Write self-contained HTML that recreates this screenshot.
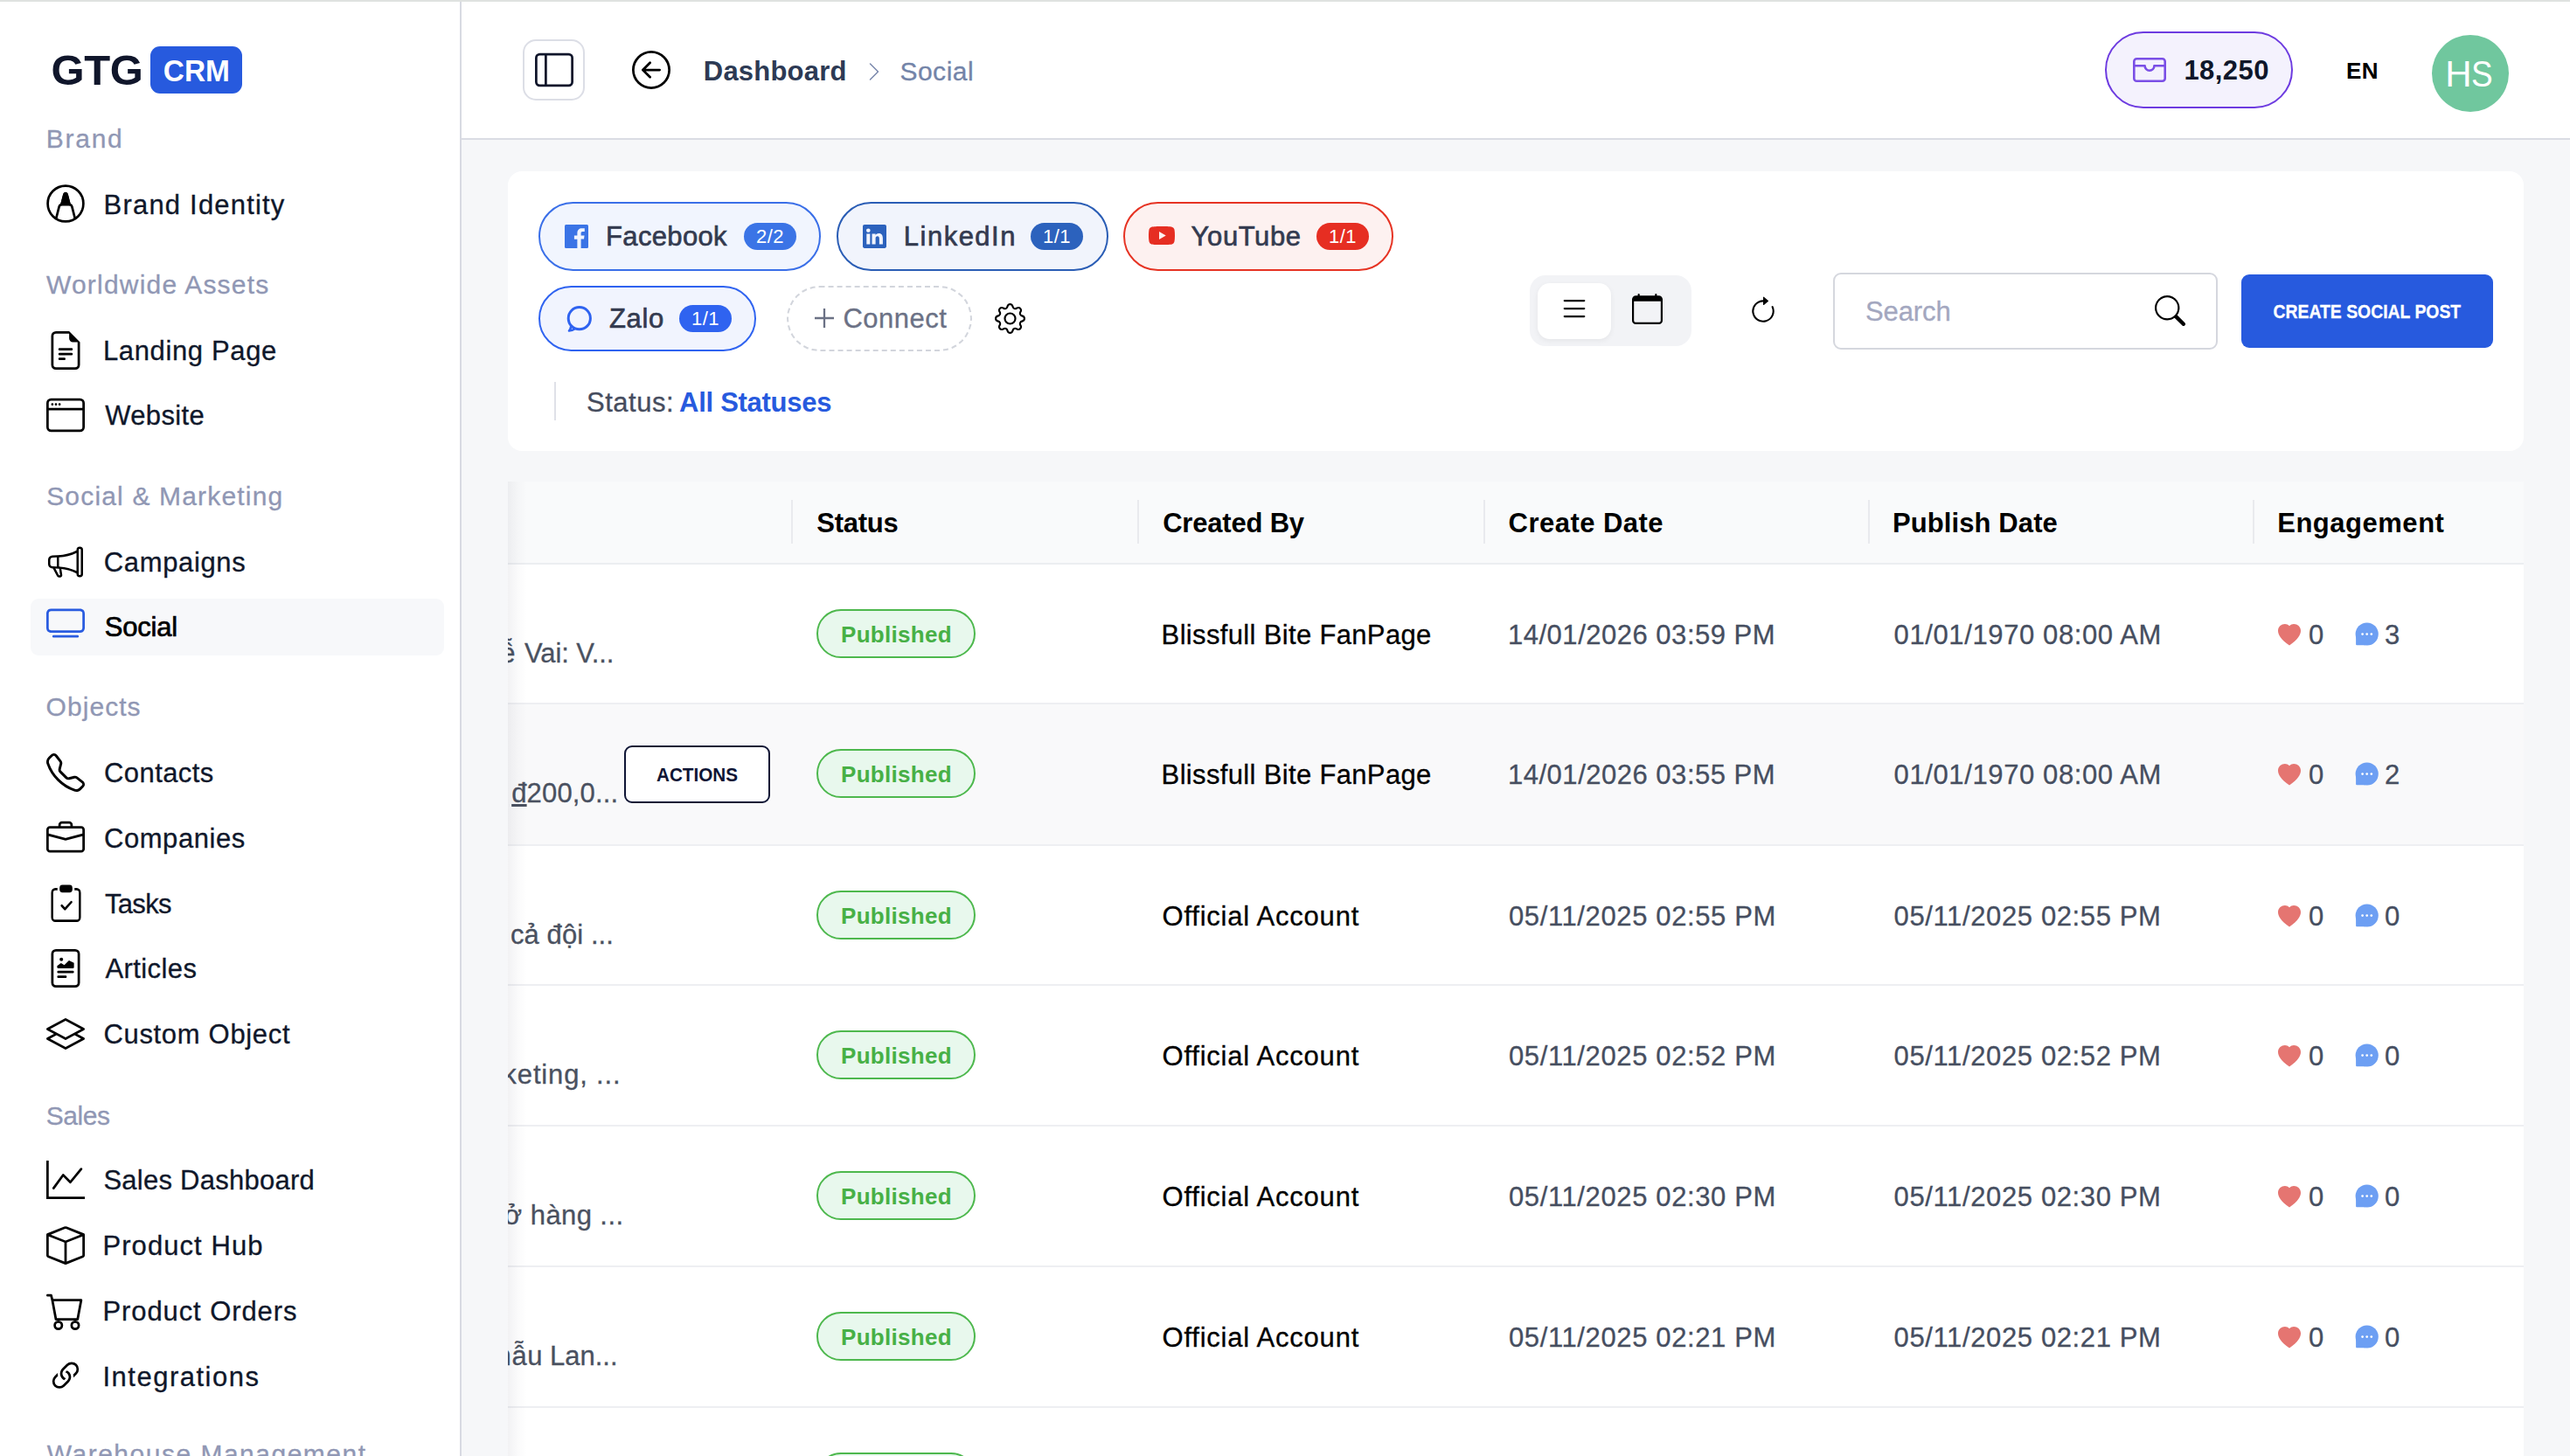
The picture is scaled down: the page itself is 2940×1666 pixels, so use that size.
<!DOCTYPE html>
<html>
<head>
<meta charset="utf-8">
<title>Social</title>
<style>
*{box-sizing:border-box;margin:0;padding:0}
html,body{width:2940px;height:1666px;overflow:hidden;background:#f6f7f9;font-family:"Liberation Sans",sans-serif;}
body{position:relative}
.abs{position:absolute}
svg{display:block}
#topline{left:0;top:0;width:2940px;height:2px;background:#dfe2e0;z-index:10}
/* sidebar */
#sidebar{left:0;top:0;width:528px;height:1666px;background:#fff;border-right:2px solid #d8dae2}
.sh{position:absolute;left:53px;height:40px;line-height:40px;font-size:30px;color:#9097b4;white-space:nowrap;letter-spacing:.6px}
.si{position:absolute;left:35px;width:473px;height:65px;border-radius:9px;display:flex;align-items:center;color:#0f172a;font-size:31px;white-space:nowrap;letter-spacing:.9px}
.si .ic{position:absolute;left:18px;top:10px;width:44px;height:44px}
.si .tx{position:absolute;left:84px;top:0;line-height:65px}
.si.on{background:#f7f8fa;color:#000;-webkit-text-stroke:.7px #000}
.si,.sh,.c0,.cb,.dt,#bc2,#sph,#st1,#p5{-webkit-text-stroke:.3px}
#st2{-webkit-text-stroke:0}
#logo{left:0;top:0}
.gtg{position:absolute;left:58px;top:53px;font-size:49px;line-height:54px;font-weight:bold;color:#10162b;letter-spacing:.2px}
.crm{position:absolute;left:172px;top:53px;width:105px;height:54px;border-radius:11px;background:#275ade;color:#fff;font-size:35px;font-weight:bold;line-height:55px;text-align:center}
/* header */
#header{left:528px;top:0;width:2412px;height:160px;background:#fff;border-bottom:2px solid #dadce4}
.t{white-space:nowrap}
#tgl{left:70px;top:45px;width:71px;height:70px;border:2px solid #dcdee6;border-radius:15px;background:#fff}
#credit{left:1880px;top:36px;width:215px;height:88px;border:2px solid #6d3be0;border-radius:44px;background:#f4f2fd}
#avatar{left:2254px;top:40px;width:88px;height:88px;border-radius:50%;background:#70c79e;color:#fff;font-size:42px;line-height:89px;text-align:center}
/* cards */
#filters{left:581px;top:196px;width:2306px;height:320px;background:#fff;border-radius:16px}
.pill{border:2px solid;border-radius:40px}
.pt{top:1px;line-height:74px;font-size:31px;color:#333a4f;-webkit-text-stroke:.65px #333a4f}
.bdg{width:60px;height:31px;border-radius:16px;color:#fff;font-size:22px;line-height:31px;text-align:center;letter-spacing:.5px}
#vt{width:185px;height:81px;border-radius:18px;background:#f2f3f6}
#vta{left:9px;top:9px;width:84px;height:64px;border-radius:14px;background:#fff;box-shadow:0 2px 6px rgba(0,0,0,.06)}
#search{width:440px;height:88px;border:2px solid #d5d7de;border-radius:9px;background:#fff}
#create{width:288px;height:84px;border-radius:9px;background:#275ade;color:#fff;font-weight:bold;font-size:22px;line-height:86px;text-align:center}
#createt{display:inline-block;margin-left:0px;-webkit-text-stroke:.3px #fff;transform:scaleX(.881);transform-origin:50% 50%}
#actt{display:inline-block;transform:scaleX(.94);transform-origin:50% 50%}
#crm{display:inline-block;transform:scaleX(.955);transform-origin:50% 50%}
#table{left:581px;top:551px;width:2306px;height:1115px;background:#fff;overflow:hidden}
#thead{background:#f9fafb;border-bottom:2px solid #eceef1}
.th{font-size:31px;font-weight:bold;line-height:42px;color:#000;letter-spacing:.3px}
.row{border-bottom:2px solid #eeeff2;background:#fff}
.row.hov{background:#f9f9fa}
.c0{font-size:31px;line-height:42px;color:#4a5160;letter-spacing:.5px}
.cb{font-size:31px;line-height:42px;color:#000;letter-spacing:.5px}
.dt{font-size:31px;line-height:42px;color:#464e60;letter-spacing:.4px}
.pub{width:182px;height:56px;border:2px solid #4db84d;border-radius:28px;background:#e8f8ed;color:#47b046;font-weight:bold;font-size:26px;line-height:54px;text-align:center}
#actions{width:167px;height:66px;border:2.500px solid #0f1535;border-radius:9px;background:#fff;color:#0f1535;font-weight:bold;font-size:22px;line-height:64px;text-align:center}
#lshadow{left:0;top:0;width:22px;height:1115px;background:linear-gradient(90deg,rgba(20,20,50,.055),rgba(20,20,50,.02) 50%,rgba(20,20,50,0))}
.pre{right:100%;top:0;white-space:pre}
/*FIT*/
#gtg{letter-spacing:-0.30px;margin-left:0.4px}
#h0{letter-spacing:1.73px;margin-left:-0.2px}
#h1{letter-spacing:1.20px;margin-left:0.0px}
#h2{letter-spacing:1.17px;margin-left:0.2px}
#h3{letter-spacing:1.05px;margin-left:-0.4px}
#h4{letter-spacing:-0.45px;margin-left:-0.2px}
#h5{letter-spacing:1.50px;margin-left:0.8px}
#i0{letter-spacing:1.19px;margin-left:-0.4px}
#i1{letter-spacing:0.63px;margin-left:-1.0px}
#i2{letter-spacing:0.35px;margin-left:1.2px}
#i3{letter-spacing:0.64px;margin-left:-0.2px}
#i4{letter-spacing:-0.22px;margin-left:0.8px}
#i5{letter-spacing:0.42px;margin-left:0.0px}
#i6{letter-spacing:0.55px;margin-left:0.0px}
#i7{letter-spacing:-0.70px;margin-left:1.0px}
#i8{letter-spacing:0.43px;margin-left:1.4px}
#i9{letter-spacing:0.68px;margin-left:-0.6px}
#i10{letter-spacing:0.25px;margin-left:-0.6px}
#i11{letter-spacing:1.08px;margin-left:-1.6px}
#i12{letter-spacing:0.91px;margin-left:-1.6px}
#i13{letter-spacing:1.51px;margin-left:-1.6px}
#bc1{letter-spacing:0.21px;margin-left:0.8px}
#bc2{letter-spacing:0.52px;margin-left:0.4px}
#crd{letter-spacing:0.44px;margin-left:-1.6px}
#lang{letter-spacing:0.40px;margin-left:0.0px}
#p1{letter-spacing:0.35px;margin-left:-2.0px}
#p2{letter-spacing:1.49px;margin-left:-2.2px}
#p3{letter-spacing:0.60px;margin-left:-0.4px}
#p4{letter-spacing:0.66px;margin-left:-1.0px}
#p5{letter-spacing:0.50px;margin-left:-0.6px}
#sph{letter-spacing:-0.12px;margin-left:0.0px}
#st0{letter-spacing:0.50px;margin-left:1.0px}
#st2{letter-spacing:-0.28px;margin-left:-2.6px}
#th0{letter-spacing:-0.22px;margin-left:0.2px}
#th1{letter-spacing:-0.20px;margin-left:0.2px}
#th2{letter-spacing:0.46px;margin-left:-0.4px}
#th3{letter-spacing:0.10px;margin-left:-1.0px}
#th4{letter-spacing:0.52px;margin-left:-0.8px}
#c00{letter-spacing:-0.12px;margin-left:1.0px}
#c01{letter-spacing:0.17px;margin-left:0.5px}
#c02{letter-spacing:0.08px;margin-left:0.5px}
#c03{letter-spacing:0.84px;margin-left:0.5px}
#c04{letter-spacing:0.40px;margin-left:-0.0px}
#c05{letter-spacing:0.00px;margin-left:-1.0px}
#pubt0{letter-spacing:0.29px;margin-left:1.0px}
#cb0{letter-spacing:0.34px;margin-left:-1.4px}
#dt0{letter-spacing:0.51px;margin-left:-1.0px}
#dt1{letter-spacing:0.61px;margin-left:0.6px}
#pubt1{letter-spacing:0.29px;margin-left:1.0px}
#cb1{letter-spacing:0.34px;margin-left:-1.4px}
#dt4{letter-spacing:0.51px;margin-left:-1.0px}
#dt5{letter-spacing:0.61px;margin-left:0.6px}
#pubt2{letter-spacing:0.29px;margin-left:1.0px}
#cb2{letter-spacing:0.77px;margin-left:-0.4px}
#dt8{letter-spacing:0.62px;margin-left:0.0px}
#dt9{letter-spacing:0.62px;margin-left:0.6px}
#pubt3{letter-spacing:0.29px;margin-left:1.0px}
#cb3{letter-spacing:0.77px;margin-left:-0.4px}
#dt12{letter-spacing:0.62px;margin-left:0.0px}
#dt13{letter-spacing:0.62px;margin-left:0.6px}
#pubt4{letter-spacing:0.29px;margin-left:1.0px}
#cb4{letter-spacing:0.77px;margin-left:-0.4px}
#dt16{letter-spacing:0.62px;margin-left:0.0px}
#dt17{letter-spacing:0.62px;margin-left:0.6px}
#pubt5{letter-spacing:0.29px;margin-left:1.0px}
#cb5{letter-spacing:0.77px;margin-left:-0.4px}
#dt20{letter-spacing:0.62px;margin-left:0.0px}
#dt21{letter-spacing:0.62px;margin-left:0.6px}
/*ENDFIT*/
</style>
</head>
<body>
<div id="topline" class="abs"></div>
<div id="sidebar" class="abs">
<div id="logo" class="abs"><span class="gtg" id="gtg">GTG</span><span class="crm"><span id="crm">CRM</span></span></div>
<div class="sh" id="h0" style="top:139px">Brand</div>
<div class="sh" id="h1" style="top:306px">Worldwide Assets</div>
<div class="sh" id="h2" style="top:547.5px">Social &amp; Marketing</div>
<div class="sh" id="h3" style="top:789px">Objects</div>
<div class="sh" id="h4" style="top:1257px">Sales</div>
<div class="sh" id="h5" style="top:1644px">Warehouse Management</div>
<div class="si" style="top:201.5px"><span class="ic" style="top:9px"><svg viewBox="0 0 44 44" width="44" height="44" fill="none" stroke="#000" stroke-width="2.7" stroke-linejoin="round" stroke-linecap="round"><circle cx="22" cy="22" r="20.4"/><path d="M11.2 39 L14.6 25.6 Q15 24 16.5 23.3 L17.6 22.8 L20.6 11.2 Q22 9 23.4 11.2 L26.4 22.8 L27.5 23.3 Q29 24 29.4 25.6 L32.8 39"/><path d="M20.6 11.2 Q22 9 23.4 11.2 L26.6 23.2 L17.4 23.2 Z" fill="#000"/></svg></span><span class="tx" id="i0">Brand Identity</span></div>
<div class="si" style="top:368.5px"><span class="ic"><svg viewBox="0 0 16 16" width="44" height="44" fill="#000"><path d="M5.5 7a.5.5 0 0 0 0 1h5a.5.5 0 0 0 0-1h-5zM5 9.5a.5.5 0 0 1 .5-.5h5a.5.5 0 0 1 0 1h-5a.5.5 0 0 1-.5-.5zm0 2a.5.5 0 0 1 .5-.5h2a.5.5 0 0 1 0 1h-2a.5.5 0 0 1-.5-.5z"/><path d="M9.5 0H4a2 2 0 0 0-2 2v12a2 2 0 0 0 2 2h8a2 2 0 0 0 2-2V4.5L9.5 0zm0 1v2A1.5 1.5 0 0 0 11 4.5h2V14a1 1 0 0 1-1 1H4a1 1 0 0 1-1-1V2a1 1 0 0 1 1-1h5.5z"/></svg></span><span class="tx" id="i1">Landing Page</span></div>
<div class="si" style="top:443.0px"><span class="ic"><svg viewBox="0 0 16 16" width="44" height="44" fill="#000"><path d="M2.5 4a.5.5 0 1 0 0-1 .5.5 0 0 0 0 1zm2-.5a.5.5 0 1 1-1 0 .5.5 0 0 1 1 0zm1 .5a.5.5 0 1 0 0-1 .5.5 0 0 0 0 1z"/><path d="M2 1a2 2 0 0 0-2 2v10a2 2 0 0 0 2 2h12a2 2 0 0 0 2-2V3a2 2 0 0 0-2-2H2zm13 2v2H1V3a1 1 0 0 1 1-1h12a1 1 0 0 1 1 1zM2 14a1 1 0 0 1-1-1V6h14v7a1 1 0 0 1-1 1H2z"/></svg></span><span class="tx" id="i2">Website</span></div>
<div class="si" style="top:610.5px"><span class="ic"><svg viewBox="0 0 16 16" width="40" height="40" style="margin:2px 0 0 2px" fill="#000"><path d="M13 2.5a1.5 1.5 0 0 1 3 0v11a1.5 1.5 0 0 1-3 0v-.214c-2.162-1.241-4.49-1.843-6.912-2.083l.405 2.712A1 1 0 0 1 5.51 15.1h-.548a1 1 0 0 1-.916-.599l-1.85-3.49a68.14 68.14 0 0 0-.202-.003A2.014 2.014 0 0 1 0 9V7a2.02 2.02 0 0 1 1.992-2.013 74.663 74.663 0 0 0 2.483-.075c3.043-.154 6.148-.849 8.525-2.199V2.5zm1 0v11a.5.5 0 0 0 1 0v-11a.5.5 0 0 0-1 0zm-1 1.35c-2.344 1.205-5.209 1.842-8 2.033v4.233c.18.01.359.022.537.036 2.568.189 5.093.744 7.463 1.993V3.85zm-9 6.215v-4.13a95.09 95.09 0 0 1-1.992.052A1.02 1.02 0 0 0 1 7v2c0 .55.448 1.002 1.006 1.009A60.49 60.49 0 0 1 4 10.065zm-.657.975 1.609 3.037.01.024h.548l-.002-.014-.443-2.966a68.019 68.019 0 0 0-1.722-.082z"/></svg></span><span class="tx" id="i3">Campaigns</span></div>
<div class="si on" style="top:684.5px"><span class="ic" style="top:6px"><svg viewBox="0 0 16 16" width="44" height="44" fill="#2a5ce0"><path d="M2.5 13.5A.5.5 0 0 1 3 13h10a.5.5 0 0 1 0 1H3a.5.5 0 0 1-.5-.5zM13.991 3l.024.001a1.46 1.46 0 0 1 .538.143.757.757 0 0 1 .302.254c.067.1.145.277.145.602v5.991l-.001.024a1.464 1.464 0 0 1-.143.538.758.758 0 0 1-.254.302c-.1.067-.277.145-.602.145H2.009l-.024-.001a1.464 1.464 0 0 1-.538-.143.758.758 0 0 1-.302-.254C1.078 10.502 1 10.325 1 10V4.009l.001-.024a1.46 1.46 0 0 1 .143-.538.758.758 0 0 1 .254-.302C1.498 3.078 1.675 3 2 3h11.991zM14 2H2C0 2 0 4 0 4v6c0 2 2 2 2 2h12c2 0 2-2 2-2V4c0-2-2-2-2-2z"/></svg></span><span class="tx" id="i4">Social</span></div>
<div class="si" style="top:851.5px"><span class="ic"><svg viewBox="0 0 16 16" width="44" height="44" fill="#000"><path d="M3.654 1.328a.678.678 0 0 0-1.015-.063L1.605 2.3c-.483.484-.661 1.169-.45 1.77a17.568 17.568 0 0 0 4.168 6.608 17.569 17.569 0 0 0 6.608 4.168c.601.211 1.286.033 1.77-.45l1.034-1.034a.678.678 0 0 0-.063-1.015l-2.307-1.794a.678.678 0 0 0-.58-.122l-2.19.547a1.745 1.745 0 0 1-1.657-.459L5.482 8.062a1.745 1.745 0 0 1-.46-1.657l.548-2.19a.678.678 0 0 0-.122-.58L3.654 1.328zM1.884.511a1.745 1.745 0 0 1 2.612.163L6.29 2.98c.329.423.445.974.315 1.494l-.547 2.19a.678.678 0 0 0 .178.643l2.457 2.457a.678.678 0 0 0 .644.178l2.189-.547a1.745 1.745 0 0 1 1.494.315l2.306 1.794c.829.645.905 1.87.163 2.611l-1.034 1.034c-.74.74-1.846 1.065-2.877.702a18.634 18.634 0 0 1-7.01-4.42 18.634 18.634 0 0 1-4.42-7.009c-.362-1.03-.037-2.137.703-2.877L1.885.511z"/></svg></span><span class="tx" id="i5">Contacts</span></div>
<div class="si" style="top:926.5px"><span class="ic"><svg viewBox="0 0 16 16" width="44" height="44" fill="#000"><path d="M6.5 1A1.5 1.5 0 0 0 5 2.5V3H1.5A1.5 1.5 0 0 0 0 4.5v8A1.5 1.5 0 0 0 1.5 14h13a1.5 1.5 0 0 0 1.5-1.5v-8A1.5 1.5 0 0 0 14.5 3H11v-.5A1.5 1.5 0 0 0 9.5 1h-3zm0 1h3a.5.5 0 0 1 .5.5V3H6v-.5a.5.5 0 0 1 .5-.5zm1.886 6.914L15 7.151V12.5a.5.5 0 0 1-.5.5h-13a.5.5 0 0 1-.5-.5V7.15l6.614 1.764a1.5 1.5 0 0 0 .772 0zM1.5 4h13a.5.5 0 0 1 .5.5v1.616L8.129 7.948a.5.5 0 0 1-.258 0L1 6.116V4.5a.5.5 0 0 1 .5-.5z"/></svg></span><span class="tx" id="i6">Companies</span></div>
<div class="si" style="top:1001.5px"><span class="ic"><svg viewBox="0 0 16 16" width="39" height="43" preserveAspectRatio="none" fill="#000" style="margin-left:2.500px;margin-top:.5px"><path fill-rule="evenodd" d="M10.854 7.146a.5.5 0 0 1 0 .708l-3 3a.5.5 0 0 1-.708 0l-1.500-1.500a.5.5 0 1 1 .708-.708L7.500 9.793l2.646-2.647a.5.5 0 0 1 .708 0z"/><path d="M4 1.500H3a2 2 0 0 0-2 2V14a2 2 0 0 0 2 2h10a2 2 0 0 0 2-2V3.500a2 2 0 0 0-2-2h-1v1h1a1 1 0 0 1 1 1V14a1 1 0 0 1-1 1H3a1 1 0 0 1-1-1V3.500a1 1 0 0 1 1-1h1v-1z"/><path d="M6.300 0.200A1.300 1.300 0 0 0 5 1.500v.6A1.300 1.300 0 0 0 6.300 3.400h3.400A1.300 1.300 0 0 0 11 2.100v-.6A1.300 1.300 0 0 0 9.700 0.200z"/></svg></span><span class="tx" id="i7">Tasks</span></div>
<div class="si" style="top:1076.0px"><span class="ic"><svg viewBox="0 0 16 16" width="44" height="44" fill="#000"><path d="M7 4.25a.75.75 0 1 1-1.5 0 .75.75 0 0 1 1.5 0zm-.861 1.542 1.33.886 1.854-1.855a.25.25 0 0 1 .289-.047l1.888.974V7.5a.5.5 0 0 1-.5.5H5a.5.5 0 0 1-.5-.5V7s1.54-1.274 1.639-1.208zM5 9a.5.5 0 0 0 0 1h6a.5.5 0 0 0 0-1H5zm0 2a.5.5 0 0 0 0 1h3a.5.5 0 0 0 0-1H5z"/><path d="M2 2a2 2 0 0 1 2-2h8a2 2 0 0 1 2 2v12a2 2 0 0 1-2 2H4a2 2 0 0 1-2-2V2zm10-1H4a1 1 0 0 0-1 1v12a1 1 0 0 0 1 1h8a1 1 0 0 0 1-1V2a1 1 0 0 0-1-1z"/></svg></span><span class="tx" id="i8">Articles</span></div>
<div class="si" style="top:1151.0px"><span class="ic"><svg viewBox="0 0 16 16" width="44" height="44" fill="#000"><path d="M8.235 1.559a.5.5 0 0 0-.47 0l-7.5 4a.5.5 0 0 0 0 .882L3.188 8 .264 9.559a.5.5 0 0 0 0 .882l7.5 4a.5.5 0 0 0 .47 0l7.5-4a.5.5 0 0 0 0-.882L12.813 8l2.922-1.559a.5.5 0 0 0 0-.882l-7.5-4zm3.515 7.008L14.438 10 8 13.433 1.562 10 4.25 8.567l3.515 1.874a.5.5 0 0 0 .47 0l3.515-1.874zM8 9.433 1.562 6 8 2.567 14.438 6 8 9.433z"/></svg></span><span class="tx" id="i9">Custom Object</span></div>
<div class="si" style="top:1317.5px"><span class="ic"><svg viewBox="0 0 16 16" width="44" height="44" fill="#000"><path fill-rule="evenodd" d="M0 0h1v15h15v1H0V0zm14.817 3.113a.5.5 0 0 1 .07.704l-4.5 5.5a.5.5 0 0 1-.74.037L7.06 6.767l-3.656 5.027a.5.5 0 0 1-.808-.588l4-5.5a.5.5 0 0 1 .758-.06l2.609 2.61 4.15-5.073a.5.5 0 0 1 .704-.07z"/></svg></span><span class="tx" id="i10">Sales Dashboard</span></div>
<div class="si" style="top:1392.5px"><span class="ic"><svg viewBox="0 0 16 16" width="44" height="44" fill="#000"><path d="M8.186 1.113a.5.5 0 0 0-.372 0L1.846 3.5 8 5.961 14.154 3.5 8.186 1.113zM15 4.239l-6.5 2.6v7.922l6.5-2.6V4.24zM7.5 14.762V6.838L1 4.239v7.923l6.5 2.6zM7.443.184a1.5 1.5 0 0 1 1.114 0l7.129 2.852A.5.5 0 0 1 16 3.5v8.662a1 1 0 0 1-.629.928l-7.185 2.874a.5.5 0 0 1-.372 0L.63 13.09a1 1 0 0 1-.63-.928V3.5a.5.5 0 0 1 .314-.464L7.443.184z"/></svg></span><span class="tx" id="i11">Product Hub</span></div>
<div class="si" style="top:1467.5px"><span class="ic"><svg viewBox="0 0 16 16" width="44" height="44" fill="#000"><path d="M0 1.5A.5.5 0 0 1 .5 1H2a.5.5 0 0 1 .485.379L2.89 3H14.5a.5.5 0 0 1 .491.592l-1.5 8A.5.5 0 0 1 13 12H4a.5.5 0 0 1-.491-.408L2.01 3.607 1.61 2H.5a.5.5 0 0 1-.5-.5zM3.102 4l1.313 7h8.17l1.313-7H3.102zM5 12a2 2 0 1 0 0 4 2 2 0 0 0 0-4zm7 0a2 2 0 1 0 0 4 2 2 0 0 0 0-4zm-7 1a1 1 0 1 1 0 2 1 1 0 0 1 0-2zm7 0a1 1 0 1 1 0 2 1 1 0 0 1 0-2z"/></svg></span><span class="tx" id="i12">Product Orders</span></div>
<div class="si" style="top:1542.5px"><span class="ic"><svg viewBox="0 0 16 16" width="44" height="44" fill="#000"><path d="M4.715 6.542 3.343 7.914a3 3 0 1 0 4.243 4.243l1.828-1.829A3 3 0 0 0 8.586 5.5L8 6.086a1.002 1.002 0 0 0-.154.199 2 2 0 0 1 .861 3.337L6.88 11.45a2 2 0 1 1-2.83-2.83l.793-.792a4.018 4.018 0 0 1-.128-1.287z"/><path d="M6.586 4.672A3 3 0 0 0 7.414 9.500l.775-.776a2 2 0 0 1-.896-3.346L9.12 3.55a2 2 0 1 1 2.83 2.83l-.793.792c.112.42.155.855.128 1.287l1.372-1.372a3 3 0 1 0-4.243-4.243L6.586 4.672z"/></svg></span><span class="tx" id="i13">Integrations</span></div>
</div>
<div id="header" class="abs">
<div class="abs" id="tgl"><svg viewBox="0 0 16 16" width="44" height="44" fill="#10162b" style="position:absolute;left:12px;top:11px"><path d="M0 3a2 2 0 0 1 2-2h12a2 2 0 0 1 2 2v10a2 2 0 0 1-2 2H2a2 2 0 0 1-2-2V3zm5-1v12h9a1 1 0 0 0 1-1V3a1 1 0 0 0-1-1H5zM4 2H2a1 1 0 0 0-1 1v10a1 1 0 0 0 1 1h2V2z"/></svg></div>
<svg class="abs" style="left:195px;top:58px" viewBox="0 0 16 16" width="44" height="44" fill="#000"><path fill-rule="evenodd" d="M1 8a7 7 0 1 0 14 0A7 7 0 0 0 1 8zm15 0A8 8 0 1 1 0 8a8 8 0 0 1 16 0zm-4.500-.5a.5.5 0 0 1 0 1H5.707l2.147 2.146a.5.5 0 0 1-.708.708l-3-3a.5.5 0 0 1 0-.708l3-3a.5.5 0 1 1 .708.708L5.707 7.500H11.500z"/></svg>
<div class="abs t" id="bc1" style="left:276px;top:61px;line-height:42px;font-size:31px;font-weight:bold;color:#2d3a54">Dashboard</div>
<svg class="abs" style="left:460px;top:70px" viewBox="0 0 16 16" width="24" height="24" fill="#7b89ad"><path fill-rule="evenodd" d="M4.646 1.646a.5.5 0 0 1 .708 0l6 6a.5.5 0 0 1 0 .708l-6 6a.5.5 0 0 1-.708-.708L10.293 8 4.646 2.354a.5.5 0 0 1 0-.708z"/></svg>
<div class="abs t" id="bc2" style="left:501px;top:61px;line-height:42px;font-size:30px;color:#7384a8">Social</div>
<div class="abs" id="credit"><svg class="abs" style="left:30px;top:28px" viewBox="0 0 38 28" width="38" height="28" fill="none" stroke="#7a4fe6" stroke-width="2.6" stroke-linejoin="round"><rect x="1.3" y="1.3" width="35.4" height="25.4" rx="3"/><path d="M1.300 9.300H13.600a5.400 5.400 0 0 0 10.800 0H36.700"/></svg><span class="abs t" id="crd" style="left:90px;top:22px;line-height:42px;font-size:31px;font-weight:bold;color:#0f172a">18,250</span></div>
<div class="abs t" id="lang" style="left:2156px;top:60px;line-height:42px;font-size:26px;font-weight:bold;color:#000">EN</div>
<div class="abs" id="avatar"><span id="hs">H<span style="display:inline-block;margin-left:-1px;transform:scaleX(.88);transform-origin:0 50%">S</span></span></div>
</div>
<div id="filters" class="abs">
<div class="pill abs" style="left:35px;top:35px;width:323px;height:79px;border-color:#3a6fe8;background:#f1f5fe">
 <span class="abs" style="left:28px;top:24px"><svg viewBox="0 0 27 27" width="27" height="27"><rect width="27" height="27" rx="1.500" fill="#3b74e6"/><path d="M18.600 27V16.600h3.400l.55-4.100H18.600V10c0-1.200.35-2 2.050-2h2.150V4.300c-.4-.05-1.650-.15-3.150-.15-3.100 0-5.250 1.900-5.250 5.400v3H10.900v4.100h3.500V27z" fill="#f1f5fe"/></svg></span><span class="abs t pt" id="p1" style="left:77px">Facebook</span><span class="abs bdg" style="left:233px;top:22px;background:#3b74e6">2/2</span></div>
<div class="pill abs" style="left:376px;top:35px;width:311px;height:79px;border-color:#2a5db5;background:#f1f4fc">
 <span class="abs" style="left:28px;top:24px"><svg viewBox="0 0 16 16" width="27" height="27" fill="#2c62bd"><path d="M0 1.146C0 .513.526 0 1.175 0h13.650C15.474 0 16 .513 16 1.146v13.708c0 .633-.526 1.146-1.175 1.146H1.175C.526 16 0 15.487 0 14.854V1.146zm4.943 12.248V6.169H2.542v7.225h2.401zm-1.200-8.212c.837 0 1.358-.554 1.358-1.248-.015-.709-.520-1.248-1.342-1.248-.822 0-1.359.540-1.359 1.248 0 .694.521 1.248 1.327 1.248h.016zm4.908 8.212V9.359c0-.216.016-.432.080-.586.173-.431.568-.878 1.232-.878.869 0 1.216.662 1.216 1.634v3.865h2.401V9.250c0-2.220-1.184-3.252-2.764-3.252-1.274 0-1.845.700-2.165 1.193v.025h-.016a5.540 5.540 0 0 1 .016-.025V6.169h-2.400c.030.678 0 7.225 0 7.225h2.400z"/></svg></span><span class="abs t pt" id="p2" style="left:77px">LinkedIn</span><span class="abs bdg" style="left:220px;top:22px;background:#2c62bd">1/1</span></div>
<div class="pill abs" style="left:704px;top:35px;width:309px;height:79px;border-color:#e63323;background:#fdf1f0">
 <span class="abs" style="left:27px;top:26px"><svg viewBox="0 2 16 12" width="30" height="22.500" fill="#e62e22"><path d="M8.051 1.999h.089c.822.003 4.987.033 6.110.335a2.010 2.010 0 0 1 1.415 1.420c.101.380.172.883.220 1.402l.010.104.022.260.008.104c.065.914.073 1.770.074 1.957v.075c-.001.194-.010 1.108-.082 2.060l-.008.105-.009.104c-.050.572-.124 1.140-.235 1.558a2.007 2.007 0 0 1-1.415 1.420c-1.160.312-5.569.334-6.180.335h-.142c-.309 0-1.587-.006-2.927-.052l-.170-.006-.087-.004-.171-.007-.171-.007c-1.110-.049-2.167-.128-2.654-.260a2.007 2.007 0 0 1-1.415-1.419c-.111-.417-.185-.986-.235-1.558L.090 9.820l-.008-.104A31.400 31.400 0 0 1 0 7.680v-.123c.002-.215.010-.958.064-1.778l.007-.103.003-.052.008-.104.022-.260.010-.104c.048-.519.119-1.023.220-1.402a2.007 2.007 0 0 1 1.415-1.420c.487-.130 1.544-.210 2.654-.260l.170-.007.172-.006.086-.003.171-.007A99.788 99.788 0 0 1 7.858 2h.193zM6.400 5.209v4.818l4.157-2.408L6.400 5.209z"/></svg></span><span class="abs t pt" id="p3" style="left:76px">YouTube</span><span class="abs bdg" style="left:219px;top:22px;background:#e62e22">1/1</span></div>
<div class="pill abs" style="left:35px;top:131px;width:249px;height:75px;border-color:#2f63f0;background:#f1f4fe">
 <span class="abs" style="left:29px;top:21px"><svg viewBox="0 0 30 30" width="30" height="30" fill="none" stroke="#2f63f0" stroke-width="3" stroke-linejoin="round" stroke-linecap="round"><circle cx="15.800" cy="14.200" r="12.600"/><path d="M6.300 23.200c-.3 2-1 3.800-2.300 5.300 2.600-.1 4.800-.9 6.500-2.300" stroke-width="2.600"/></svg></span><span class="abs t pt" id="p4" style="left:80px;top:-1px">Zalo</span><span class="abs bdg" style="left:159px;top:20px;background:#2f63f0">1/1</span></div>
<div class="pill abs" style="left:319px;top:131px;width:212px;height:75px;border:2px dashed #d2d5dc;background:#fff">
 <svg class="abs" style="left:30px;top:24px" width="22" height="22" viewBox="0 0 22 22" stroke="#6b7185" stroke-width="2.300" fill="none"><path d="M11 0v22M0 11h22"/></svg><span class="abs t" id="p5" style="left:63px;top:1px;line-height:70px;font-size:31px;color:#6b7185">Connect</span></div>
<span class="abs" style="left:557px;top:151px"><svg viewBox="0 0 16 16" width="35" height="35" fill="#000"><path d="M8 4.754a3.246 3.246 0 1 0 0 6.492 3.246 3.246 0 0 0 0-6.492zM5.754 8a2.246 2.246 0 1 1 4.492 0 2.246 2.246 0 0 1-4.492 0z"/><path d="M9.796 1.343c-.527-1.790-3.065-1.790-3.592 0l-.094.319a.873.873 0 0 1-1.255.520l-.292-.160c-1.640-.892-3.433.902-2.540 2.541l.159.292a.873.873 0 0 1-.520 1.255l-.319.094c-1.790.527-1.790 3.065 0 3.592l.319.094a.873.873 0 0 1 .520 1.255l-.160.292c-.892 1.640.901 3.434 2.541 2.540l.292-.159a.873.873 0 0 1 1.255.520l.094.319c.527 1.790 3.065 1.790 3.592 0l.094-.319a.873.873 0 0 1 1.255-.520l.292.160c1.640.893 3.434-.902 2.540-2.541l-.159-.292a.873.873 0 0 1 .520-1.255l.319-.094c1.790-.527 1.790-3.065 0-3.592l-.319-.094a.873.873 0 0 1-.520-1.255l.160-.292c.893-1.640-.902-3.433-2.541-2.540l-.292.159a.873.873 0 0 1-1.255-.520l-.094-.319zm-2.633.283c.246-.835 1.428-.835 1.674 0l.094.319a1.873 1.873 0 0 0 2.693 1.115l.291-.160c.764-.415 1.600.420 1.184 1.185l-.159.292a1.873 1.873 0 0 0 1.116 2.692l.318.094c.835.246.835 1.428 0 1.674l-.319.094a1.873 1.873 0 0 0-1.115 2.693l.160.291c.415.764-.420 1.600-1.185 1.184l-.291-.159a1.873 1.873 0 0 0-2.693 1.116l-.094.318c-.246.835-1.428.835-1.674 0l-.094-.319a1.873 1.873 0 0 0-2.692-1.115l-.292.160c-.764.415-1.600-.420-1.184-1.185l.159-.291A1.873 1.873 0 0 0 1.945 8.930l-.319-.094c-.835-.246-.835-1.428 0-1.674l.319-.094A1.873 1.873 0 0 0 3.060 4.377l-.160-.292c-.415-.764.420-1.600 1.185-1.184l.292.159a1.873 1.873 0 0 0 2.692-1.115l.094-.319z"/></svg></span>
<div class="abs" id="vt" style="left:1169px;top:119px"><div class="abs" id="vta"><svg style="position:absolute;left:24px;top:11px" viewBox="0 0 16 16" width="36" height="36" fill="#000"><path fill-rule="evenodd" d="M2.500 12a.5.5 0 0 1 .5-.5h10a.5.5 0 0 1 0 1H3a.5.5 0 0 1-.5-.5zm0-4a.5.5 0 0 1 .5-.5h10a.5.5 0 0 1 0 1H3a.5.5 0 0 1-.5-.5zm0-4a.5.5 0 0 1 .5-.5h10a.5.5 0 0 1 0 1H3a.5.5 0 0 1-.5-.5z"/></svg></div><span class="abs" style="left:117px;top:21px"><svg viewBox="0 0 16 16" width="35" height="35" fill="#000"><path d="M3.500 0a.5.5 0 0 1 .5.5V1h8V.5a.5.5 0 0 1 1 0V1h1a2 2 0 0 1 2 2v11a2 2 0 0 1-2 2H2a2 2 0 0 1-2-2V3a2 2 0 0 1 2-2h1V.5a.5.5 0 0 1 .5-.5zM1 4v10a1 1 0 0 0 1 1h12a1 1 0 0 0 1-1V4H1z"/></svg></span></div>
<span class="abs" style="left:1418.500px;top:142.500px"><svg viewBox="0 0 16 16" width="34" height="34" fill="#000"><path fill-rule="evenodd" d="M8 3a5 5 0 1 0 4.546 2.914.5.5 0 0 1 .908-.417A6 6 0 1 1 8 2v1z"/><path d="M8 4.466V.534a.25.25 0 0 1 .410-.192l2.360 1.966c.120.100.120.284 0 .384L8.410 4.658A.25.25 0 0 1 8 4.466z"/></svg></span>
<div class="abs" id="search" style="left:1516px;top:116px"><span class="abs t" id="sph" style="left:35px;top:1px;line-height:84px;font-size:31px;color:#a3a7bf">Search</span><span class="abs" style="left:366px;top:24px"><svg viewBox="0 0 16 16" width="35" height="35" fill="#000"><path d="M11.742 10.344a6.500 6.500 0 1 0-1.397 1.398h-.001c.030.040.062.078.098.115l3.850 3.850a1 1 0 0 0 1.415-1.414l-3.850-3.850a1.007 1.007 0 0 0-.115-.100zM12 6.500a5.500 5.500 0 1 1-11 0 5.500 5.500 0 0 1 11 0z"/></svg></span></div>
<div class="abs t" id="create" style="left:1983px;top:118px"><span id="createt">CREATE SOCIAL POST</span></div>
<div class="abs" style="left:53px;top:241px;width:2px;height:44px;background:#dfe1e8"></div>
<div class="abs t" id="st1" style="left:89px;top:244px;line-height:42px;font-size:31px;color:#454c5e"><span id="st0">Status:</span> <b id="st2" style="color:#275ade">All Statuses</b></div>
</div>
<div id="table" class="abs">
<div class="abs" id="thead" style="left:0;top:0;width:2306px;height:95px"></div>
<div class="abs" style="left:324px;top:21px;width:2px;height:50px;background:#e9eaee"></div>
<div class="abs t th" id="th0" style="left:353px;top:27px">Status</div>
<div class="abs" style="left:720px;top:21px;width:2px;height:50px;background:#e9eaee"></div>
<div class="abs t th" id="th1" style="left:749px;top:27px">Created By</div>
<div class="abs" style="left:1116px;top:21px;width:2px;height:50px;background:#e9eaee"></div>
<div class="abs t th" id="th2" style="left:1145px;top:27px">Create Date</div>
<div class="abs" style="left:1556px;top:21px;width:2px;height:50px;background:#e9eaee"></div>
<div class="abs t th" id="th3" style="left:1585px;top:27px">Publish Date</div>
<div class="abs" style="left:1996px;top:21px;width:2px;height:50px;background:#e9eaee"></div>
<div class="abs t th" id="th4" style="left:2025px;top:27px">Engagement</div>
<div class="abs row" style="left:0;top:95px;width:2306px;height:160px">
<div class="abs t c0" style="margin-top:.5px;left:18.0px;top:80px"><span class="abs pre">ễ </span><span id="c00">Vai: V...</span></div>
<div class="abs t pub" id="pub0" style="left:353px;top:51px"><span id="pubt0">Published</span></div>
<div class="abs t cb" id="cb0" style="left:749px;top:60px">Blissfull Bite FanPage</div>
<div class="abs t dt" id="dt0" style="left:1145px;top:60px">14/01/2026 03:59 PM</div>
<div class="abs t dt" id="dt1" style="left:1585px;top:60px">01/01/1970 08:00 AM</div>
<span class="abs" style="left:2025px;top:67.5px"><svg viewBox="0 0 16 16" width="26" height="26" fill="#e57571"><path fill-rule="evenodd" d="M8 1.314C12.438-3.248 23.534 4.735 8 15-7.534 4.736 3.562-3.248 8 1.314z"/></svg></span><div class="abs t dt" id="dt2" style="left:2060px;top:60px">0</div>
<span class="abs" style="left:2112.5px;top:65.500px"><svg viewBox="0 0 27 27" width="27" height="27"><circle cx="13.700" cy="13.500" r="13.100" fill="#6d9ff3"/><path d="M1.100 15v10.200a1 1 0 0 0 1 1H12z" fill="#6d9ff3"/><circle cx="8.600" cy="13.600" r="1.350" fill="#fff"/><circle cx="13.700" cy="13.600" r="1.350" fill="#fff"/><circle cx="18.800" cy="13.600" r="1.350" fill="#fff"/></svg></span><div class="abs t dt" id="dt3" style="left:2147px;top:60px">3</div>
</div>
<div class="abs row hov" style="left:0;top:255px;width:2306px;height:162px">
<div class="abs t c0" style="margin-top:.5px;left:3.7px;top:80px"><span class="abs pre"></span><span id="c01"><u>đ</u>200,0...</span></div>
<div class="abs t" id="actions" style="left:133px;top:47px"><span id="actt">ACTIONS</span></div>
<div class="abs t pub" id="pub1" style="left:353px;top:51px"><span id="pubt1">Published</span></div>
<div class="abs t cb" id="cb1" style="left:749px;top:60px">Blissfull Bite FanPage</div>
<div class="abs t dt" id="dt4" style="left:1145px;top:60px">14/01/2026 03:55 PM</div>
<div class="abs t dt" id="dt5" style="left:1585px;top:60px">01/01/1970 08:00 AM</div>
<span class="abs" style="left:2025px;top:67.5px"><svg viewBox="0 0 16 16" width="26" height="26" fill="#e57571"><path fill-rule="evenodd" d="M8 1.314C12.438-3.248 23.534 4.735 8 15-7.534 4.736 3.562-3.248 8 1.314z"/></svg></span><div class="abs t dt" id="dt6" style="left:2060px;top:60px">0</div>
<span class="abs" style="left:2112.5px;top:65.500px"><svg viewBox="0 0 27 27" width="27" height="27"><circle cx="13.700" cy="13.500" r="13.100" fill="#6d9ff3"/><path d="M1.100 15v10.200a1 1 0 0 0 1 1H12z" fill="#6d9ff3"/><circle cx="8.600" cy="13.600" r="1.350" fill="#fff"/><circle cx="13.700" cy="13.600" r="1.350" fill="#fff"/><circle cx="18.800" cy="13.600" r="1.350" fill="#fff"/></svg></span><div class="abs t dt" id="dt7" style="left:2147px;top:60px">2</div>
</div>
<div class="abs row" style="left:0;top:417px;width:2306px;height:160px">
<div class="abs t c0" style="margin-top:.5px;left:2.5px;top:80px"><span class="abs pre"></span><span id="c02">cả đội ...</span></div>
<div class="abs t pub" id="pub2" style="left:353px;top:51px"><span id="pubt2">Published</span></div>
<div class="abs t cb" id="cb2" style="left:749px;top:60px">Official Account</div>
<div class="abs t dt" id="dt8" style="left:1145px;top:60px">05/11/2025 02:55 PM</div>
<div class="abs t dt" id="dt9" style="left:1585px;top:60px">05/11/2025 02:55 PM</div>
<span class="abs" style="left:2025px;top:67.5px"><svg viewBox="0 0 16 16" width="26" height="26" fill="#e57571"><path fill-rule="evenodd" d="M8 1.314C12.438-3.248 23.534 4.735 8 15-7.534 4.736 3.562-3.248 8 1.314z"/></svg></span><div class="abs t dt" id="dt10" style="left:2060px;top:60px">0</div>
<span class="abs" style="left:2112.5px;top:65.500px"><svg viewBox="0 0 27 27" width="27" height="27"><circle cx="13.700" cy="13.500" r="13.100" fill="#6d9ff3"/><path d="M1.100 15v10.200a1 1 0 0 0 1 1H12z" fill="#6d9ff3"/><circle cx="8.600" cy="13.600" r="1.350" fill="#fff"/><circle cx="13.700" cy="13.600" r="1.350" fill="#fff"/><circle cx="18.800" cy="13.600" r="1.350" fill="#fff"/></svg></span><div class="abs t dt" id="dt11" style="left:2147px;top:60px">0</div>
</div>
<div class="abs row" style="left:0;top:577px;width:2306px;height:161px">
<div class="abs t c0" style="margin-top:.5px;left:10.3px;top:80px"><span class="abs pre">k</span><span id="c03">eting, ...</span></div>
<div class="abs t pub" id="pub3" style="left:353px;top:51px"><span id="pubt3">Published</span></div>
<div class="abs t cb" id="cb3" style="left:749px;top:60px">Official Account</div>
<div class="abs t dt" id="dt12" style="left:1145px;top:60px">05/11/2025 02:52 PM</div>
<div class="abs t dt" id="dt13" style="left:1585px;top:60px">05/11/2025 02:52 PM</div>
<span class="abs" style="left:2025px;top:67.5px"><svg viewBox="0 0 16 16" width="26" height="26" fill="#e57571"><path fill-rule="evenodd" d="M8 1.314C12.438-3.248 23.534 4.735 8 15-7.534 4.736 3.562-3.248 8 1.314z"/></svg></span><div class="abs t dt" id="dt14" style="left:2060px;top:60px">0</div>
<span class="abs" style="left:2112.5px;top:65.500px"><svg viewBox="0 0 27 27" width="27" height="27"><circle cx="13.700" cy="13.500" r="13.100" fill="#6d9ff3"/><path d="M1.100 15v10.200a1 1 0 0 0 1 1H12z" fill="#6d9ff3"/><circle cx="8.600" cy="13.600" r="1.350" fill="#fff"/><circle cx="13.700" cy="13.600" r="1.350" fill="#fff"/><circle cx="18.800" cy="13.600" r="1.350" fill="#fff"/></svg></span><div class="abs t dt" id="dt15" style="left:2147px;top:60px">0</div>
</div>
<div class="abs row" style="left:0;top:738px;width:2306px;height:161px">
<div class="abs t c0" style="margin-top:.5px;left:25.8px;top:80px"><span class="abs pre">ở </span><span id="c04">hàng ...</span></div>
<div class="abs t pub" id="pub4" style="left:353px;top:51px"><span id="pubt4">Published</span></div>
<div class="abs t cb" id="cb4" style="left:749px;top:60px">Official Account</div>
<div class="abs t dt" id="dt16" style="left:1145px;top:60px">05/11/2025 02:30 PM</div>
<div class="abs t dt" id="dt17" style="left:1585px;top:60px">05/11/2025 02:30 PM</div>
<span class="abs" style="left:2025px;top:67.5px"><svg viewBox="0 0 16 16" width="26" height="26" fill="#e57571"><path fill-rule="evenodd" d="M8 1.314C12.438-3.248 23.534 4.735 8 15-7.534 4.736 3.562-3.248 8 1.314z"/></svg></span><div class="abs t dt" id="dt18" style="left:2060px;top:60px">0</div>
<span class="abs" style="left:2112.5px;top:65.500px"><svg viewBox="0 0 27 27" width="27" height="27"><circle cx="13.700" cy="13.500" r="13.100" fill="#6d9ff3"/><path d="M1.100 15v10.200a1 1 0 0 0 1 1H12z" fill="#6d9ff3"/><circle cx="8.600" cy="13.600" r="1.350" fill="#fff"/><circle cx="13.700" cy="13.600" r="1.350" fill="#fff"/><circle cx="18.800" cy="13.600" r="1.350" fill="#fff"/></svg></span><div class="abs t dt" id="dt19" style="left:2147px;top:60px">0</div>
</div>
<div class="abs row" style="left:0;top:899px;width:2306px;height:161px">
<div class="abs t c0" style="margin-top:.5px;left:49.0px;top:80px"><span class="abs pre">mẫu </span><span id="c05">Lan...</span></div>
<div class="abs t pub" id="pub5" style="left:353px;top:51px"><span id="pubt5">Published</span></div>
<div class="abs t cb" id="cb5" style="left:749px;top:60px">Official Account</div>
<div class="abs t dt" id="dt20" style="left:1145px;top:60px">05/11/2025 02:21 PM</div>
<div class="abs t dt" id="dt21" style="left:1585px;top:60px">05/11/2025 02:21 PM</div>
<span class="abs" style="left:2025px;top:67.5px"><svg viewBox="0 0 16 16" width="26" height="26" fill="#e57571"><path fill-rule="evenodd" d="M8 1.314C12.438-3.248 23.534 4.735 8 15-7.534 4.736 3.562-3.248 8 1.314z"/></svg></span><div class="abs t dt" id="dt22" style="left:2060px;top:60px">0</div>
<span class="abs" style="left:2112.5px;top:65.500px"><svg viewBox="0 0 27 27" width="27" height="27"><circle cx="13.700" cy="13.500" r="13.100" fill="#6d9ff3"/><path d="M1.100 15v10.200a1 1 0 0 0 1 1H12z" fill="#6d9ff3"/><circle cx="8.600" cy="13.600" r="1.350" fill="#fff"/><circle cx="13.700" cy="13.600" r="1.350" fill="#fff"/><circle cx="18.800" cy="13.600" r="1.350" fill="#fff"/></svg></span><div class="abs t dt" id="dt23" style="left:2147px;top:60px">0</div>
</div>
<div class="abs row" style="left:0;top:1060px;width:2306px;height:161px">
<div class="abs t pub" id="pub6" style="left:353px;top:51px"><span id="pubt6">Published</span></div>
<div class="abs t cb" id="cb6" style="left:749px;top:60px">Official Account</div>
<div class="abs t dt" id="dt24" style="left:1145px;top:60px">05/11/2025 02:10 PM</div>
<div class="abs t dt" id="dt25" style="left:1585px;top:60px">05/11/2025 02:10 PM</div>
<span class="abs" style="left:2025px;top:67.5px"><svg viewBox="0 0 16 16" width="26" height="26" fill="#e57571"><path fill-rule="evenodd" d="M8 1.314C12.438-3.248 23.534 4.735 8 15-7.534 4.736 3.562-3.248 8 1.314z"/></svg></span><div class="abs t dt" id="dt26" style="left:2060px;top:60px">0</div>
<span class="abs" style="left:2112.5px;top:65.500px"><svg viewBox="0 0 27 27" width="27" height="27"><circle cx="13.700" cy="13.500" r="13.100" fill="#6d9ff3"/><path d="M1.100 15v10.200a1 1 0 0 0 1 1H12z" fill="#6d9ff3"/><circle cx="8.600" cy="13.600" r="1.350" fill="#fff"/><circle cx="13.700" cy="13.600" r="1.350" fill="#fff"/><circle cx="18.800" cy="13.600" r="1.350" fill="#fff"/></svg></span><div class="abs t dt" id="dt27" style="left:2147px;top:60px">0</div>
</div>
<div class="abs" id="lshadow"></div>
</div>
</body>
</html>
